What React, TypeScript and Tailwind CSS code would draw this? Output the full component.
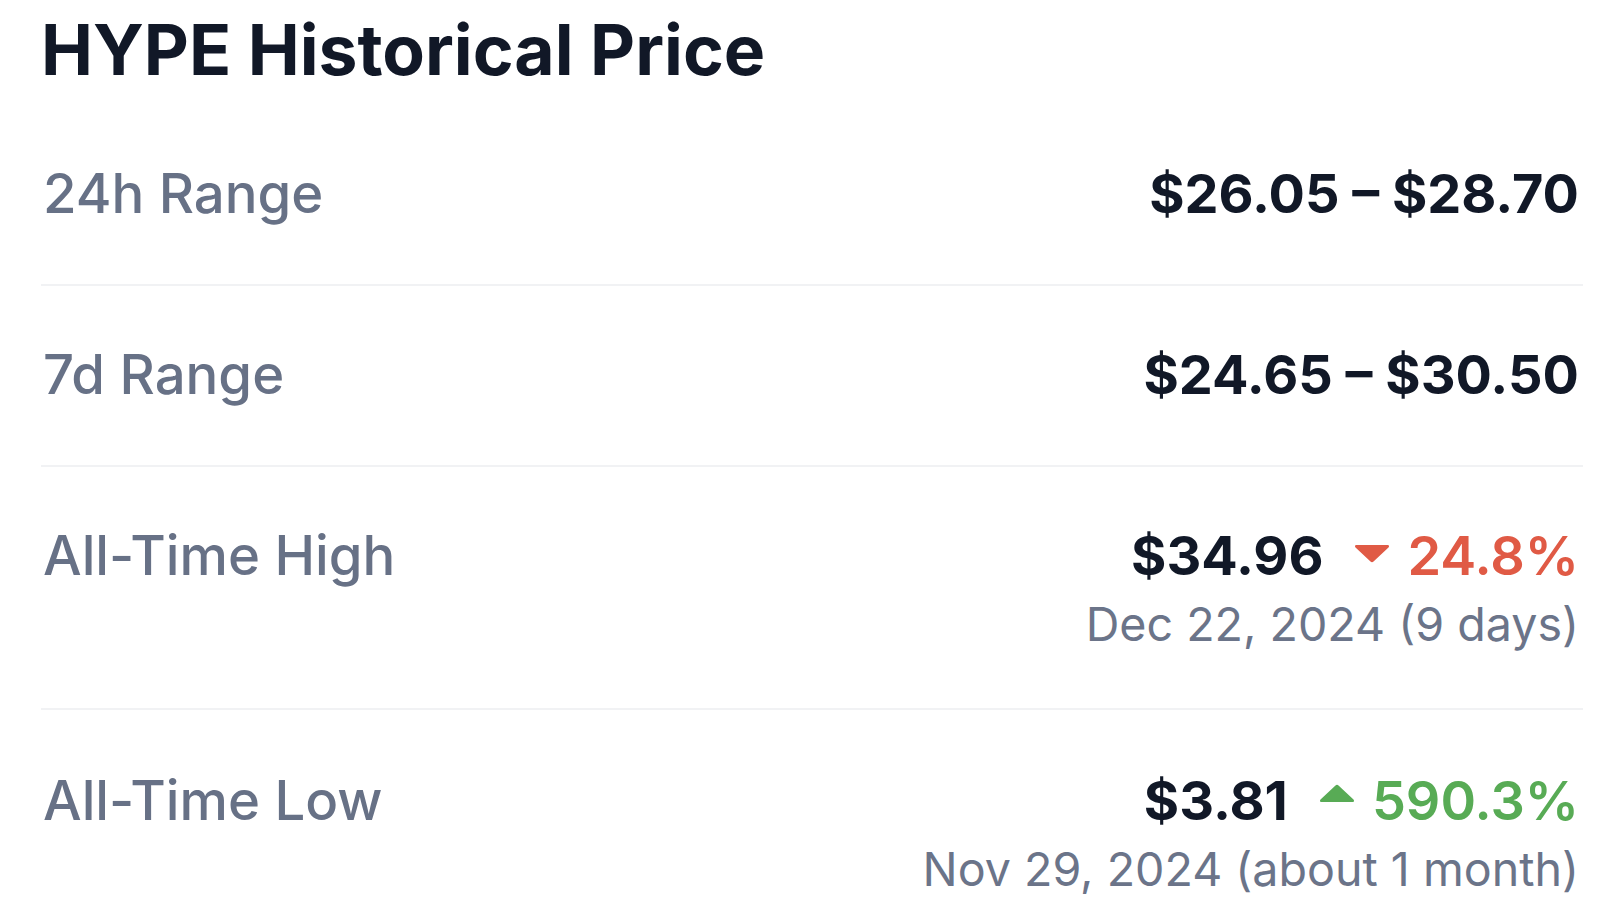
import React from 'react';

type Change = { dir: 'up' | 'down'; pct: string };

interface Row {
  label: string;
  value: string;
  change?: Change;
  sub?: string;
}

const rows: Row[] = [
  { label: '24h Range', value: '$26.05 – $28.70' },
  { label: '7d Range', value: '$24.65 – $30.50' },
  {
    label: 'All-Time High',
    value: '$34.96',
    change: { dir: 'down', pct: '24.8%' },
    sub: 'Dec 22, 2024 (9 days)',
  },
  {
    label: 'All-Time Low',
    value: '$3.81',
    change: { dir: 'up', pct: '590.3%' },
    sub: 'Nov 29, 2024 (about 1 month)',
  },
];

function Caret({ dir }: { dir: 'up' | 'down' }) {
  // rounded triangle, like the fa caret
  const d =
    dir === 'down'
      ? 'M2.5 1 H33.5 Q36 1 34.5 3.5 L19.5 17.5 Q18 19 16.5 17.5 L1.5 3.5 Q0 1 2.5 1 Z'
      : 'M2.5 18 H33.5 Q36 18 34.5 15.5 L19.5 1.5 Q18 0 16.5 1.5 L1.5 15.5 Q0 18 2.5 18 Z';
  return (
    <svg
      width="36"
      height="19"
      viewBox="0 0 36 19"
      className={dir === 'down' ? 'fill-[#e05a45] mt-[-4px]' : 'fill-[#58ab55] mt-[-14px]'}
    >
      <path d={d} />
    </svg>
  );
}

export default function App() {
  return (
    <div className="min-h-screen w-full bg-white pl-[41px] pr-[17px] pt-[15px] font-['Inter',sans-serif]">
      <h2 className="text-[69.6px] leading-[70px] font-bold text-[#111827]">HYPE Historical Price</h2>

      <div className="mt-[20px]">
        {rows.map((row, i) => (
          <div
            key={row.label}
            className={`flex items-start justify-between ${i === 3 ? 'pt-[63px]' : 'pt-[61px]'} ${
              i < rows.length - 1 ? 'border-b-2 border-[#f1f2f4]' : ''
            } ${row.sub ? 'pb-[56px]' : 'pb-[63px]'}`}
          >
            <div className="text-[54.5px] leading-[55px] font-medium text-[#677186] pl-[2px]">{row.label}</div>

            <div className="flex flex-col items-end pr-[4px]">
              <div className="flex items-center text-[54px] leading-[55px] font-bold text-[#111827]">
                <span>{row.value}</span>
                {row.change && (
                  <span
                    className={`flex items-center gap-[17px] ml-[31px] ${
                      row.change.dir === 'down' ? 'text-[#e05a45]' : 'text-[#58ab55]'
                    }`}
                  >
                    <Caret dir={row.change.dir} />
                    <span className="font-semibold">{row.change.pct}</span>
                  </span>
                )}
              </div>
              {row.sub && (
                <div className="mt-[13px] text-[46.6px] leading-[56px] font-normal text-[#6b7489]">{row.sub}</div>
              )}
            </div>
          </div>
        ))}
      </div>
    </div>
  );
}
